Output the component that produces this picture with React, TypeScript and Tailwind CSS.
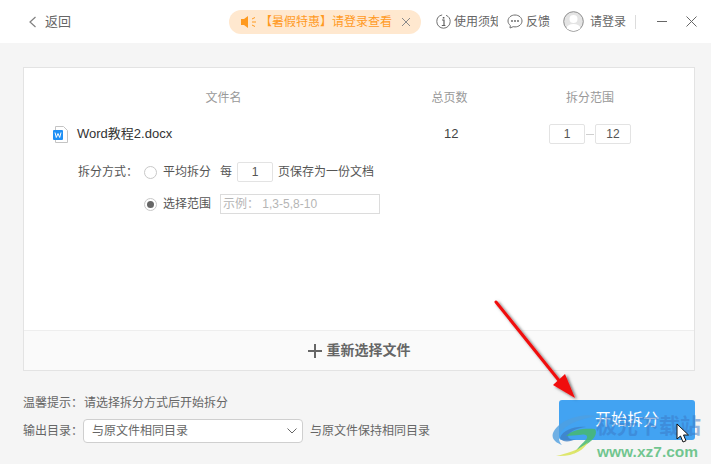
import React from "react";

const Box = ({ children, className }: { children?: React.ReactNode; className: string }) => (
  <div className={"flex items-center justify-center rounded-[2px] border border-[#e3e3e3] bg-white text-[12px] text-[#555] " + className}>{children}</div>
);

export default function App() {
  return (
    <div className="relative flex h-[464px] w-[711px] flex-col overflow-hidden bg-[#f5f5f5] text-[12px] text-[#666] [font-family:'Liberation_Sans','Noto_Sans_CJK_SC',sans-serif]">
      {/* header */}
      <header className="flex h-[43px] shrink-0 items-center bg-white pl-[28px]">
        <svg width="10" height="12" viewBox="0 0 10 12" fill="none" stroke="#808080" strokeWidth="1.2"><path d="M7.5 1 L2 6 L7.5 11" /></svg>
        <span className="ml-[7px] text-[13px] text-[#666]">返回</span>
        <div className="ml-[158px] flex h-[24px] w-[192px] items-center rounded-full bg-[#ffe8cf] pl-[12px]">
          <svg width="16" height="14" viewBox="0 0 16 14" className="shrink-0">
            <path d="M0 4h3l4-3v12l-4-3H0z" fill="#ff9a1f" />
            <path d="M11 4l3-1.5M11 7h4M11 10l3 1.5" stroke="#ff9a1f" strokeWidth="1" />
          </svg>
          <span className="ml-[3px] whitespace-nowrap text-[12px] text-[#ff9a1f]">【暑假特惠】请登录查看</span>
          <svg width="10" height="10" viewBox="0 0 10 10" className="ml-[9px] shrink-0" stroke="#8a8a8a" strokeWidth="1"><path d="M1 1l8 8M9 1l-8 8" /></svg>
        </div>
        <svg width="15" height="15" viewBox="0 0 15 15" fill="none" className="ml-[15px] shrink-0">
          <circle cx="7.5" cy="7.5" r="6.7" stroke="#707070" strokeWidth="1" strokeDasharray="30 4" />
          <rect x="6.8" y="3" width="1.6" height="1.6" fill="#606060" />
          <path d="M6 6h2v5.5M5.800 11.500h3.600" stroke="#606060" strokeWidth="1.2" />
        </svg>
        <span className="ml-[3px] w-[44px] overflow-hidden whitespace-nowrap text-[#666]">使用须知</span>
        <svg width="16" height="15" viewBox="0 0 16 15" fill="none" className="ml-[9px] shrink-0">
          <path d="M8 1C4 1 1 3.700 1 7c0 1.800.9 3.300 2.300 4.400L3 14l3.200-1.300c.6.100 1.200.2 1.800.2 4 0 7-2.700 7-5.900S12 1 8 1z" stroke="#707070" />
          <circle cx="5" cy="7" r=".9" fill="#606060" /><circle cx="8" cy="7" r=".9" fill="#606060" /><circle cx="11" cy="7" r=".9" fill="#606060" />
        </svg>
        <span className="ml-[3px] text-[#666]">反馈</span>
        <svg width="21" height="21" viewBox="0 0 21 21" className="ml-[13px] shrink-0">
          <defs><clipPath id="avatar"><circle cx="10.500" cy="10.500" r="9.500" /></clipPath></defs>
          <circle cx="10.500" cy="10.500" r="9.800" fill="#e4e4e4" stroke="#8c8c8c" strokeWidth="1" />
          <g clipPath="url(#avatar)" fill="#fff">
            <circle cx="10.500" cy="8" r="4" />
            <ellipse cx="10.500" cy="17.500" rx="7" ry="4.500" />
          </g>
        </svg>
        <span className="ml-[6px] text-[#666]">请登录</span>
        <div className="ml-[9px] h-[14px] w-px bg-[#dcdcdc]" />
        <div className="ml-[21px] h-px w-[10px] bg-[#666]" />
        <svg width="11" height="11" viewBox="0 0 11 11" className="ml-[19px] shrink-0" stroke="#666" strokeWidth="1"><path d="M.5.5l10 10M10.500.5l-10 10" /></svg>
      </header>

      {/* panel */}
      <main className="ml-[23px] mr-[16px] mt-[24px] flex h-[304px] flex-col border border-[#e3e3e3] bg-white">
        <div className="flex-1 pt-[21px]">
          <div className="flex h-[18px] items-center text-[#999]">
            <span className="ml-[181px] w-[37px] text-center">文件名</span>
            <span className="ml-[189px] w-[37px] text-center">总页数</span>
            <span className="ml-[98px] w-[48px] text-center">拆分范围</span>
          </div>
          <div className="mt-[17px] flex h-[20px] items-center">
            <svg width="15" height="17" viewBox="0 0 15 17" className="ml-[29px] shrink-0">
              <path d="M2.500.5h8l4 4v12h-12z" fill="#fff" stroke="#c4c4c4" />
              <rect x="0" y="4" width="10" height="10" rx="1" fill="#2090f5" />
              <path d="M2 6.500l1.300 5 1.700-4 1.700 4 1.300-5" fill="none" stroke="#fff" strokeWidth="1" />
            </svg>
            <span className="ml-[9px] w-[125px] whitespace-nowrap text-[13px] text-[#333]">Word教程2.docx</span>
            <span className="ml-[242px] w-[14px] text-center text-[13px] text-[#444]">12</span>
            <Box className="ml-[91px] h-[20px] w-[36px]">1</Box>
            <div className="mx-[1px] h-px w-[8px] bg-[#cfcfcf]" />
            <Box className="h-[20px] w-[36px]">12</Box>
          </div>
          <div className="mt-[18px] flex h-[20px] items-center text-[#555]">
            <span className="ml-[54px] w-[66px] whitespace-nowrap">拆分方式：</span>
            <span className="h-[13px] w-[13px] rounded-full border border-[#c8c8c8] bg-white" />
            <span className="ml-[6px] whitespace-nowrap">平均拆分</span>
            <span className="ml-[9px]">每</span>
            <Box className="ml-[5px] h-[20px] w-[36px]">1</Box>
            <span className="ml-[5px] whitespace-nowrap">页保存为一份文档</span>
          </div>
          <div className="mt-[12px] flex h-[20px] items-center text-[#555]">
            <span className="ml-[120px] flex h-[13px] w-[13px] items-center justify-center rounded-full border border-[#c8c8c8] bg-white">
              <span className="h-[7px] w-[7px] rounded-full bg-[#666]" />
            </span>
            <span className="ml-[6px] whitespace-nowrap">选择范围</span>
            <div className="ml-[9px] flex h-[20px] w-[160px] items-center border border-[#dcdcdc] bg-white pl-[2px] text-[#b5b5b5]">示例： 1,3-5,8-10</div>
          </div>
        </div>
        <div className="flex h-[40px] shrink-0 items-center justify-center gap-[5px] border-t border-[#eeeeee] bg-[#fafafa] font-bold text-[#666]">
          <svg width="14" height="14" viewBox="0 0 14 14" stroke="#666" strokeWidth="2"><path d="M7 0v14M0 7h14" /></svg>
          <span className="text-[14px]">重新选择文件</span>
        </div>
      </main>

      {/* footer */}
      <footer className="ml-[23px] mr-[16px] mt-[22px] flex items-start justify-between">
        <div className="flex flex-col">
          <div className="flex h-[20px] items-center whitespace-nowrap text-[#666]">
            <span className="w-[61px]">温馨提示：</span>
            <span>请选择拆分方式后开始拆分</span>
          </div>
          <div className="mt-[6px] flex h-[24px] items-center whitespace-nowrap text-[#666]">
            <span className="w-[60px]">输出目录：</span>
            <div className="flex h-[24px] w-[220px] items-center justify-between rounded-[4px] border border-[#cfcfcf] bg-white pl-[8px] pr-[5px]">
              <span>与原文件相同目录</span>
              <svg width="10" height="6" viewBox="0 0 10 6" fill="none" stroke="#666" strokeWidth="1"><path d="M.5.5L5 5 9.500.5" /></svg>
            </div>
            <span className="ml-[7px]">与原文件保持相同目录</span>
          </div>
        </div>
        <button className="mt-[7px] h-[40px] w-[136px] rounded-[3px] bg-[#42a3f2] text-[16px] text-white">开始拆分</button>
      </footer>

      {/* arrow annotation */}
      <svg className="absolute left-0 top-0" width="711" height="464" viewBox="0 0 711 464" fill="none">
        <defs>
          <filter id="shadow" x="-20%" y="-20%" width="150%" height="150%">
            <feDropShadow dx="2" dy="1.500" stdDeviation="1.500" floodColor="#000" floodOpacity="0.55" />
          </filter>
        </defs>
        <g filter="url(#shadow)">
          <path d="M496 302 L561 383" stroke="#f01010" strokeWidth="3" strokeLinecap="round" />
          <path d="M575 398 L553 385 L565 374 Z" fill="#f01010" />
        </g>
      </svg>

      {/* watermark */}
      <div className="pointer-events-none absolute left-[552px] top-[413px] h-[51px] w-[159px]">
        <svg className="absolute left-0 top-[1px]" width="46" height="44" viewBox="0 0 46 44" fill="none">
          <path d="M45 2C28-1 7 6 1 19c-2 6 3 10 9 12C5 26 6 19 14 13 22 7 34 4 45 2z" fill="#4f9fe0" fillOpacity=".8" />
          <path d="M8 24c3-8 14-12 26-11-9 1-16 4-18 9 0 3 4 4 8 3-6 3-13 4-16-1z" fill="#3f7fc5" fillOpacity=".8" />
          <path d="M14 22c7-7 20-8 29-7 3 4-1 11-8 15-4 2-10 5-13 10 4-8 11-12 13-16 1-4-4-4-8-3-4 0-9 1-13 1z" fill="#46b870" fillOpacity=".85" />
          <path d="M4 42c9-2 24-6 32-14-4 8-14 15-32 14z" fill="#d8e24a" fillOpacity=".8" />
        </svg>
        <span className="absolute left-[44px] top-0 whitespace-nowrap text-[21px] leading-[26px] font-bold text-[#3b78c4]/50">极光下载站</span>
        <span className="absolute left-[45px] top-[29px] whitespace-nowrap text-[15.5px] leading-[20px] font-bold text-[#45b56e]/75">www.xz7.com</span>
      </div>

      {/* cursor */}
      <svg className="absolute left-[676px] top-[423px]" width="14" height="20" viewBox="0 0 14 20">
        <path d="M1 1v15l3.500-3 2.500 6 3-1.300-2.500-5.700H12.500z" fill="#fff" stroke="#111" strokeWidth="1" />
      </svg>
    </div>
  );
}
